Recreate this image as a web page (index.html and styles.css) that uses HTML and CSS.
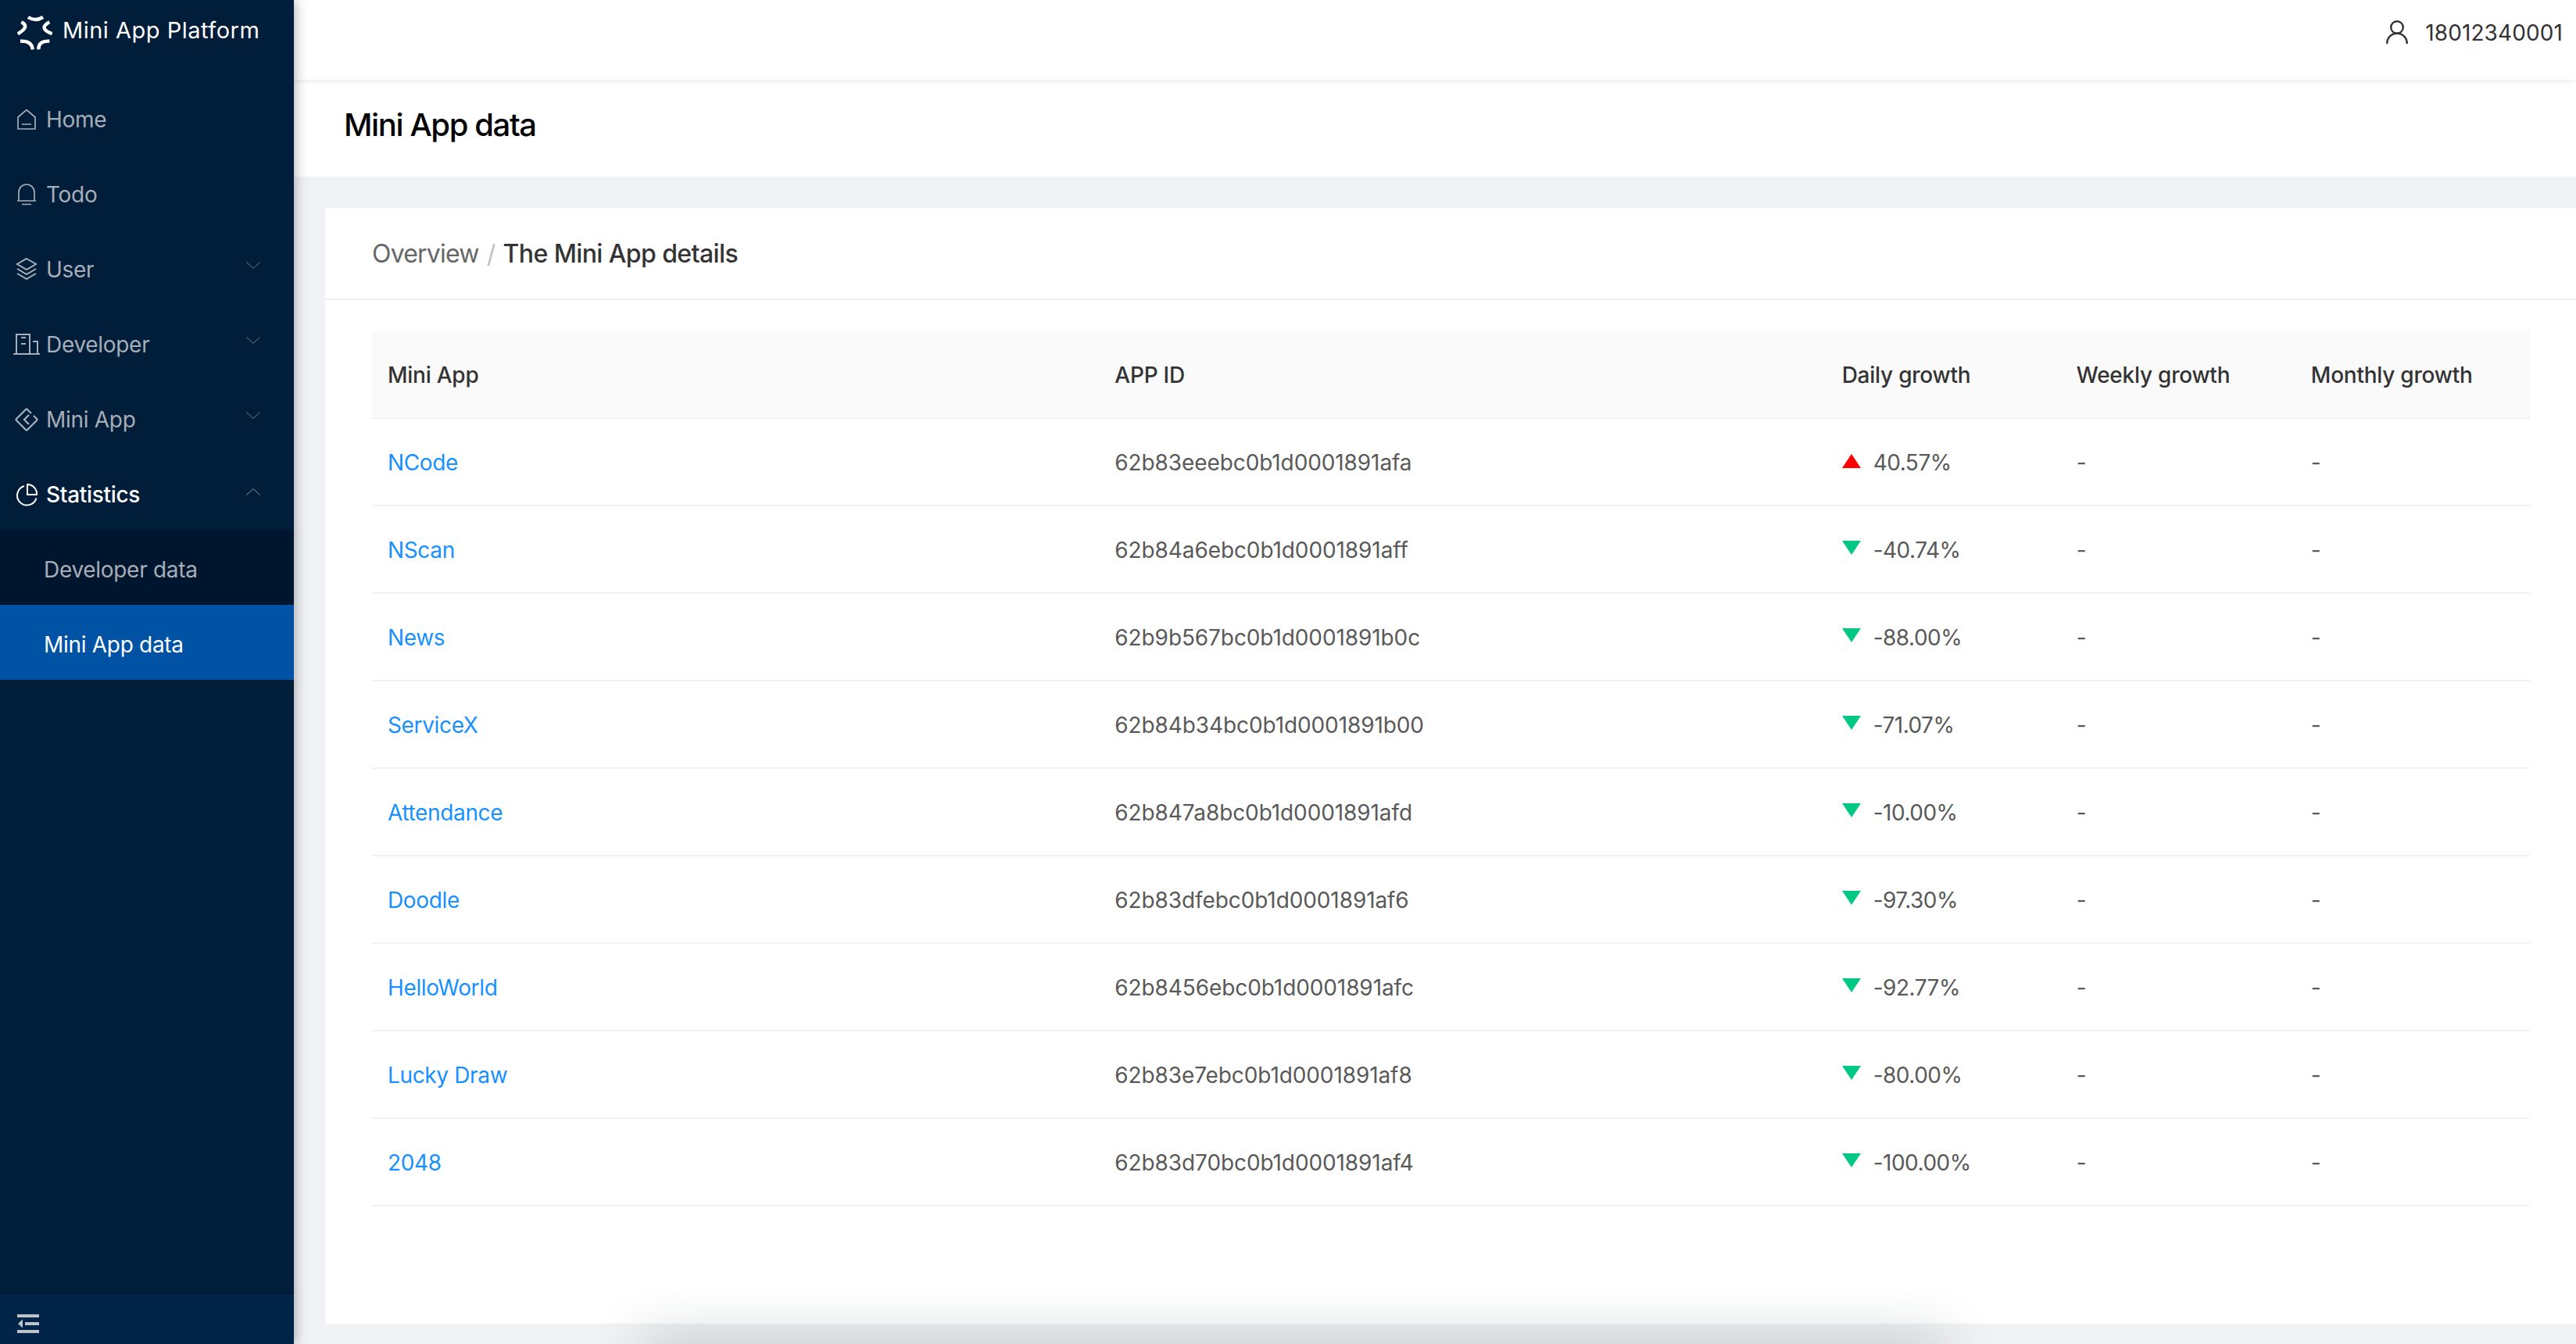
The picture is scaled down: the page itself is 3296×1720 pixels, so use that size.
FILE: index.html
```html
<!DOCTYPE html>
<html lang="en">
<head>
<meta charset="utf-8">
<title>Mini App data</title>
<link rel="stylesheet" href="styles.css">
</head>
<body>
<div class="layout">
  <aside class="sider">
    <div class="brand">
      <svg class="brand-logo" viewBox="0 0 45 45" fill="none" stroke="#fff" stroke-width="4.400"><path d="M14 2Q23 8 33 2M5.300 8.300Q17 14 .7 23.300M41.300 8.300Q26.400 16 44.700 23.300M4 32.700Q18.800 32 19.700 43.300M41.300 32.700Q27 32 27.300 43.300"/></svg>
      <span class="brand-name">Mini App Platform</span>
    </div>
    <nav class="menu">
      <div class="item">
        <svg class="ico" viewBox="0 0 36 36" fill="none" stroke="currentColor" stroke-width="1.700"><path d="M7 15 18 5.500 29 15V30H7ZM12 24H24"/></svg>
        <span>Home</span>
      </div>
      <div class="item">
        <svg class="ico" viewBox="0 0 36 36" fill="none" stroke="currentColor" stroke-width="1.700"><path d="M8 26V15a10 10 0 0 1 20 0V26M6 26H30M12 30.500H24"/></svg>
        <span>Todo</span>
      </div>
      <div class="item">
        <svg class="ico" viewBox="0 0 36 36" fill="none" stroke="currentColor" stroke-width="2"><path d="M18 4 30 11 18 18 6 11ZM6 17 18 24 30 17M6 23 18 30 30 23"/></svg>
        <span>User</span>
        <svg class="chev" viewBox="0 0 18 9" fill="none" stroke="currentColor" stroke-width="1"><path d="M.5.5 9 8.500 17.500.5"/></svg>
      </div>
      <div class="item">
        <svg class="ico" viewBox="0 0 36 36" fill="none" stroke="currentColor" stroke-width="2"><path d="M1 30H35M5 30V5H22V30M26 14H32V30M11 9H17M11 17H17"/></svg>
        <span>Developer</span>
        <svg class="chev" viewBox="0 0 18 9" fill="none" stroke="currentColor" stroke-width="1"><path d="M.5.5 9 8.500 17.500.5"/></svg>
      </div>
      <div class="item">
        <svg class="ico" viewBox="0 0 36 36" fill="none" stroke="currentColor" stroke-width="2.300"><path d="M24 10 19 5Q18 4 17 5L5 17Q4 18 5 19L17 31Q18 32 19 31L31 19Q32 18 31 17L27 13M21 12 15 18 21 24"/></svg>
        <span>Mini App</span>
        <svg class="chev" viewBox="0 0 18 9" fill="none" stroke="currentColor" stroke-width="1"><path d="M.5.5 9 8.500 17.500.5"/></svg>
      </div>
      <div class="item item-open">
        <svg class="ico" viewBox="0 0 36 36" fill="none" stroke="currentColor" stroke-width="2"><path d="M15 7A12.500 12.500 0 1 0 30.500 22.500M19 5A12 12 0 0 1 31 18H19Z"/></svg>
        <span>Statistics</span>
        <svg class="chev" viewBox="0 0 18 9" fill="none" stroke="currentColor" stroke-width="1"><path d="M.5 8.500 9 .5 17.500 8.500"/></svg>
      </div>
      <div class="submenu">
        <div class="subitem">Developer data</div>
        <div class="subitem subitem-active">Mini App data</div>
      </div>
    </nav>
    <div class="sider-foot">
      <svg class="collapse" viewBox="0 0 28 24" fill="#bdc3cb"><path d="M0 0H28V4H0ZM10 10H28V14H10ZM0 20H28V24H0ZM1 12 7 6.500V17.500Z"/></svg>
    </div>
  </aside>
  <div class="main">
    <header class="topbar">
      <svg class="user-ico" viewBox="0 0 28 30" fill="none" stroke="#333" stroke-width="2.400"><circle cx="14" cy="9" r="7.800"/><path d="M1.200 30C1.200 22 7 16.800 14 16.800S26.800 22 26.800 30"/></svg>
      <span class="user-name">18012340001</span>
    </header>
    <div class="titlebar"><h1 class="page-title">Mini App data</h1></div>
    <div class="content">
      <section class="card">
        <div class="crumbs">
          <span class="crumb-link">Overview</span>
          <span class="crumb-sep">/</span>
          <span class="crumb-current">The Mini App details</span>
        </div>
        <div class="table-wrap">
          <table class="table">
            <colgroup><col class="col-wide"><col class="col-wide"><col class="col-num"><col class="col-num"><col class="col-num"></colgroup>
            <thead><tr><th>Mini App</th><th>APP ID</th><th>Daily growth</th><th>Weekly growth</th><th>Monthly growth</th></tr></thead>
            <tbody>
              <tr><td><a class="link">NCode</a></td><td class="app-id">62b83eeebc0b1d0001891afa</td><td class="pct"><i class="tri tri-up"></i>40.57%</td><td>-</td><td>-</td></tr>
              <tr><td><a class="link">NScan</a></td><td class="app-id">62b84a6ebc0b1d0001891aff</td><td class="pct"><i class="tri tri-down"></i>-40.74%</td><td>-</td><td>-</td></tr>
              <tr><td><a class="link">News</a></td><td class="app-id">62b9b567bc0b1d0001891b0c</td><td class="pct"><i class="tri tri-down"></i>-88.00%</td><td>-</td><td>-</td></tr>
              <tr><td><a class="link">ServiceX</a></td><td class="app-id">62b84b34bc0b1d0001891b00</td><td class="pct"><i class="tri tri-down"></i>-71.07%</td><td>-</td><td>-</td></tr>
              <tr><td><a class="link">Attendance</a></td><td class="app-id">62b847a8bc0b1d0001891afd</td><td class="pct"><i class="tri tri-down"></i>-10.00%</td><td>-</td><td>-</td></tr>
              <tr><td><a class="link">Doodle</a></td><td class="app-id">62b83dfebc0b1d0001891af6</td><td class="pct"><i class="tri tri-down"></i>-97.30%</td><td>-</td><td>-</td></tr>
              <tr><td><a class="link">HelloWorld</a></td><td class="app-id">62b8456ebc0b1d0001891afc</td><td class="pct"><i class="tri tri-down"></i>-92.77%</td><td>-</td><td>-</td></tr>
              <tr><td><a class="link">Lucky Draw</a></td><td class="app-id">62b83e7ebc0b1d0001891af8</td><td class="pct"><i class="tri tri-down"></i>-80.00%</td><td>-</td><td>-</td></tr>
              <tr><td><a class="link">2048</a></td><td class="app-id">62b83d70bc0b1d0001891af4</td><td class="pct"><i class="tri tri-down"></i>-100.00%</td><td>-</td><td>-</td></tr>
            </tbody>
          </table>
        </div>
      </section>
    </div>
  </div>
</div>
<div class="dock-shadow"></div>
</body>
</html>
```

FILE: styles.css
```css
* { box-sizing: border-box; }
html, body { margin: 0; height: 100%; overflow: hidden; }
body { font-family: Inter, "Noto Sans", "Liberation Sans", sans-serif; font-size: 28px; color: #595959; background: #f0f2f5; }
.layout { display: flex; height: 1720px; }

.sider { width: 376px; flex: none; display: flex; flex-direction: column; background: #001d3a; color: #a6aeb8; box-shadow: 2px 0 14px rgba(29, 35, 41, .35); position: relative; z-index: 3; }
.brand { height: 113px; display: flex; align-items: flex-start; padding: 20px 0 0 22px; gap: 13px; color: #fff; }
.brand-logo { width: 45px; height: 45px; flex: none; }
.brand-name { font-size: 29px; line-height: 38px; letter-spacing: .5px; white-space: nowrap; }
.menu { flex: 1; }
.item { height: 80px; margin-bottom: 16px; display: flex; align-items: center; padding: 0 43px 0 16px; gap: 7px; position: relative; letter-spacing: -.3px; }
.ico { width: 36px; height: 36px; flex: none; }
.chev { width: 18px; height: 9px; position: absolute; right: 43px; top: 30px; color: #6f7d8c; }
.item-open { color: #fff; margin-bottom: 5px; font-weight: 500; }
.item-open .chev { color: #8f99a5; top: 32px; }
.submenu { background: #00152e; }
.subitem { height: 96px; display: flex; align-items: center; padding: 6px 0 0 56px; letter-spacing: -.3px; }
.subitem-active { background: #0052a4; color: #fff; }
.sider-foot { height: 65px; flex: none; background: #002447; border-top: 1px solid #001429; padding: 26px 0 0 22px; }
.collapse { width: 28px; height: 24px; display: block; }

.main { flex: 1; min-width: 0; display: flex; flex-direction: column; }
.topbar { height: 102px; flex: none; background: #fff; display: flex; align-items: flex-start; justify-content: flex-end; padding: 26px 17px 0 0; gap: 22px; box-shadow: 0 1px 8px rgba(0, 21, 41, .1); position: relative; z-index: 2; }
.user-ico { width: 28px; height: 30px; flex: none; }
.user-name { line-height: 32px; color: #333; letter-spacing: .1px; }
.titlebar { height: 124px; flex: none; background: #fff; padding: 0 0 0 64px; display: flex; align-items: center; }
.page-title { margin: 0; font-size: 40px; font-weight: 500; color: #000; line-height: 1; letter-spacing: -1.4px; position: relative; top: -4px; }
.content { flex: 1; padding: 40px 0 26px 40px; min-height: 0; display: flex; }
.card { flex: 1; background: #fff; }
.crumbs { height: 118px; border-bottom: 2px solid #f0f0f0; padding: 0 0 0 60px; display: flex; align-items: center; gap: 10px; font-size: 32px; letter-spacing: -.6px; }
.crumb-link { color: #666; letter-spacing: -.8px; }
.crumb-sep { color: #bfbfbf; }
.crumb-current { color: #333; font-weight: 500; }
.table-wrap { padding: 40px 59px 0 60px; }
.table { width: 100%; border-collapse: collapse; table-layout: fixed; }
.col-wide { width: 930px; }
.col-num { width: 300px; }
.table th { height: 111px; padding: 2px 20px 0; background: #fafafa; text-align: left; font-weight: 500; color: #333; letter-spacing: -.25px; border-bottom: 2px solid #eef1f5; }
.table td { height: 112px; padding: 2px 20px 0; border-bottom: 2px solid #eef1f5; }
.app-id { letter-spacing: -.1px; }
.pct { letter-spacing: -.5px; }
.link { color: #1890ff; letter-spacing: -.35px; }
.tri { display: inline-block; width: 0; height: 0; margin-right: 16px; border-left: 12px solid transparent; border-right: 12px solid transparent; position: relative; top: -3px; }
.tri-up { border-bottom: 18px solid #f00; }
.tri-down { border-top: 18px solid #00c781; top: -5px; vertical-align: middle; }

.dock-shadow { position: fixed; left: 830px; bottom: -40px; width: 1650px; height: 40px; box-shadow: 0 0 70px 6px rgba(30, 40, 60, .24); z-index: 5; }
```
